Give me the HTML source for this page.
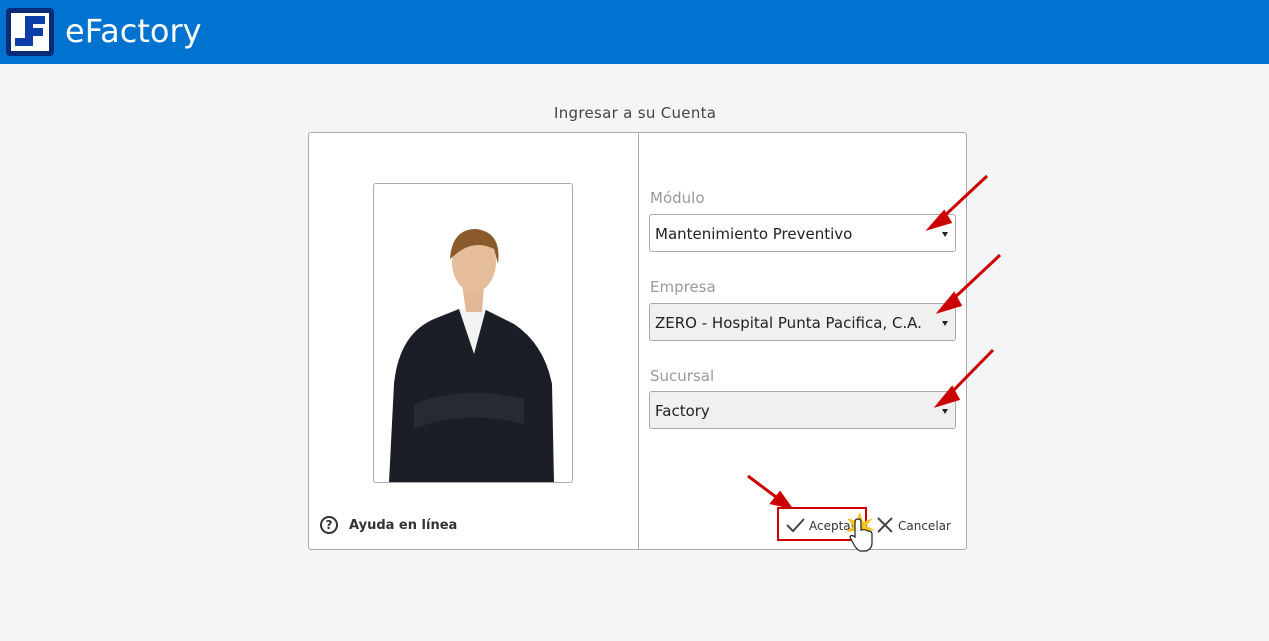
<!DOCTYPE html>
<html><head><meta charset="utf-8"><style>
body{margin:0;width:1269px;height:641px;background:#f4f5f7;font-family:"DejaVu Sans","Liberation Sans",sans-serif;position:relative;overflow:hidden}
.hdr{position:absolute;left:0;top:0;width:1269px;height:64px;background:#0073d1}
.hdr .t{position:absolute;left:65px;top:12px;color:#fff;font-size:32px;font-family:"DejaVu Sans",sans-serif}
.abs{position:absolute}
.title{left:554px;top:104px;font-size:15px;color:#444;letter-spacing:0.3px}
.card{left:308px;top:132px;width:659px;height:418px;background:#fff;border:1px solid #aaa;border-radius:3px;box-sizing:border-box}
.div{left:638px;top:133px;width:1px;height:417px;background:#aaa}
.photo{left:373px;top:183px;width:200px;height:300px;border:1px solid #aaa;border-radius:3px;box-sizing:border-box;background:#fff;overflow:hidden}
.lbl{font-size:15px;color:#9a9a9a}
.sel{left:649px;width:307px;height:38px;border:1px solid #aaa;border-radius:3px;box-sizing:border-box;font-size:15px;color:#222;padding:10px 0 0 5px}
.sel::after{content:"";position:absolute;right:7px;top:17px;border:3px solid transparent;border-top:5px solid #222;border-bottom:0}
</style></head><body>
<div class="hdr">
<svg class="abs" style="left:6px;top:8px" width="48" height="48" viewBox="0 0 48 48">
<rect x="0" y="0" width="48" height="48" rx="4" fill="#0b2a78"/>
<rect x="5" y="5" width="38" height="38" fill="#fff"/>
<path d="M17 8h22v8H27v4h10v8H27v10H9v-8h10V8z" fill="#0b3ea8"/>
<rect x="17" y="8" width="4" height="16" fill="#fff" opacity="0"/>
</svg>
<div class="t">eFactory</div>
</div>
<div class="abs title">Ingresar a su Cuenta</div>
<div class="abs card"></div>
<div class="abs div"></div>
<div class="abs photo">
<svg width="198" height="298" viewBox="0 0 198 298">
<path d="M15 298 L20 200 Q25 150 60 135 L85 125 L110 125 L140 140 Q170 160 178 200 L180 298 Z" fill="#1b1e26"/>
<path d="M85 125 L100 170 L112 125 Z" fill="#f2f2f2"/>
<path d="M40 220 Q90 200 150 215 L150 240 Q90 225 40 245 Z" fill="#262a33"/>
<path d="M88 100 L92 128 L108 128 L110 100 Z" fill="#e2b895"/>
<ellipse cx="100" cy="78" rx="22" ry="30" fill="#e6bd9a"/>
<path d="M76 75 Q78 45 102 45 Q128 48 124 80 L120 65 Q100 55 82 70 Z" fill="#8a5a2c"/>
</svg>
</div>
<div class="abs" style="left:320px;top:516px;width:18px;height:18px;border:2px solid #333;border-radius:50%;box-sizing:border-box;font-size:12px;font-weight:bold;text-align:center;line-height:15px;color:#333">?</div>
<div class="abs" style="left:349px;top:518px;font-size:13px;font-weight:bold;color:#333">Ayuda en línea</div>
<div class="abs lbl" style="left:650px;top:189px">Módulo</div>
<div class="abs sel" style="top:214px;background:#fff">Mantenimiento Preventivo</div>
<div class="abs lbl" style="left:650px;top:278px">Empresa</div>
<div class="abs sel" style="top:303px;background:#f0f0f0">ZERO - Hospital Punta Pacifica, C.A.</div>
<div class="abs lbl" style="left:650px;top:367px">Sucursal</div>
<div class="abs sel" style="top:391px;background:#f0f0f0">Factory</div>
<svg class="abs" style="left:0;top:0" width="1269" height="641">
<g stroke="#c00" stroke-width="3" fill="#c00">
<line x1="987" y1="176" x2="940" y2="220"/><polygon points="930,228 944,212 950,222" />
<line x1="1000" y1="255" x2="950" y2="302"/><polygon points="940,311 954,294 960,305"/>
<line x1="993" y1="350" x2="948" y2="396"/><polygon points="938,405 952,388 958,399"/>
<line x1="748" y1="476" x2="780" y2="500"/><polygon points="790,507 772,503 780,493"/>
</g>
<rect x="778" y="508" width="88" height="32" fill="none" stroke="#c00" stroke-width="2"/>
<path d="M787 525 l6 6 l11 -12" stroke="#444" stroke-width="2" fill="none"/>
<text x="809" y="530" font-family="DejaVu Sans" font-size="12" fill="#333">Aceptar</text>
<path d="M878 518 l14 14 M892 518 l-14 14" stroke="#444" stroke-width="2"/>
<text x="898" y="530" font-family="DejaVu Sans" font-size="12" fill="#333">Cancelar</text>
<path d="M860 512 l3 10 l10 -4 l-7 8 l9 4 l-10 1 l2 9 l-7 -7 l-5 8 l0 -10 l-9 1 l7 -6 l-6 -8 l9 3z" fill="#f5c518"/>
<path d="M855 530 v-8 q0 -3 3 -3 q3 0 3 3 v8 q4 -1 7 1 q4 0 4 3 v9 q0 6 -6 8 h-6 q-4 -2 -7 -8 l-3 -6 q1 -3 5 0z" fill="#fff" stroke="#222" stroke-width="1.2"/>
</svg>
</body></html>
